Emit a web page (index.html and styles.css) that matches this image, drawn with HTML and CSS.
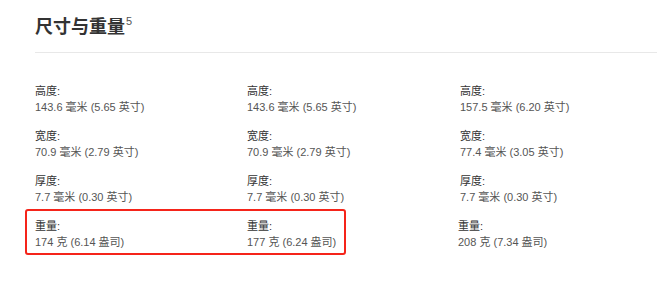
FILE: index.html
```html
<!DOCTYPE html>
<html lang="zh-CN">
<head>
<meta charset="utf-8">
<link rel="stylesheet" href="styles.css">
</head>
<body>
<section class="specs">
  <h2 class="title">尺寸与重量<sup class="note">5</sup></h2>
  <div class="grid">
    <div class="col">
      <div class="item"><div class="label">高度:</div><div class="value">143.6 毫米 (5.65 英寸)</div></div>
      <div class="item"><div class="label">宽度:</div><div class="value">70.9 毫米 (2.79 英寸)</div></div>
      <div class="item"><div class="label">厚度:</div><div class="value">7.7 毫米 (0.30 英寸)</div></div>
    </div>
    <div class="col">
      <div class="item"><div class="label">高度:</div><div class="value">143.6 毫米 (5.65 英寸)</div></div>
      <div class="item"><div class="label">宽度:</div><div class="value">70.9 毫米 (2.79 英寸)</div></div>
      <div class="item"><div class="label">厚度:</div><div class="value">7.7 毫米 (0.30 英寸)</div></div>
    </div>
    <div class="col">
      <div class="item"><div class="label">高度:</div><div class="value">157.5 毫米 (6.20 英寸)</div></div>
      <div class="item"><div class="label">宽度:</div><div class="value">77.4 毫米 (3.05 英寸)</div></div>
      <div class="item"><div class="label">厚度:</div><div class="value">7.7 毫米 (0.30 英寸)</div></div>
    </div>
  </div>
  <div class="weights">
    <div class="highlight">
      <div class="item cell"><div class="label">重量:</div><div class="value">174 克 (6.14 盎司)</div></div>
      <div class="item cell"><div class="label">重量:</div><div class="value">177 克 (6.24 盎司)</div></div>
    </div>
    <div class="item cell"><div class="label">重量:</div><div class="value">208 克 (7.34 盎司)</div></div>
  </div>
</section>
</body>
</html>
```
FILE: styles.css
```css
html, body {
  margin: 0;
  padding: 0;
  background: #fff;
}
body {
  font-family: "Liberation Sans", "Noto Sans CJK SC", sans-serif;
  color: #333;
}
.specs {
  padding: 14px 10px 0 35px;
}
.title {
  margin: 0;
  font-size: 18px;
  line-height: 26px;
  font-weight: 700;
  color: #333;
  padding-bottom: 12px;
  border-bottom: 1px solid #e8e8e8;
}
.note {
  font-size: 11px;
  font-weight: 400;
  color: #555;
  vertical-align: top;
  line-height: 14px;
  margin-left: 1px;
}
.grid {
  display: grid;
  grid-template-columns: 212px 213px 1fr;
  margin-top: 30px;
}
.item {
  height: 45px;
}
.label {
  font-size: 11px;
  line-height: 16px;
  color: #333;
}
.value {
  font-size: 11px;
  line-height: 17px;
  color: #555;
}
.weights {
  display: flex;
  margin-left: -10px;
}
.highlight {
  display: flex;
  border: 2px solid #f5241a;
  border-radius: 3px;
  width: 309px;
  height: 42px;
  padding-left: 8px;
  margin-top: -9px;
}
.highlight .cell {
  padding-top: 7px;
  height: auto;
}
.highlight .cell:first-child {
  width: 212px;
}
.weights > .cell {
  margin-left: 112px;
}
```
